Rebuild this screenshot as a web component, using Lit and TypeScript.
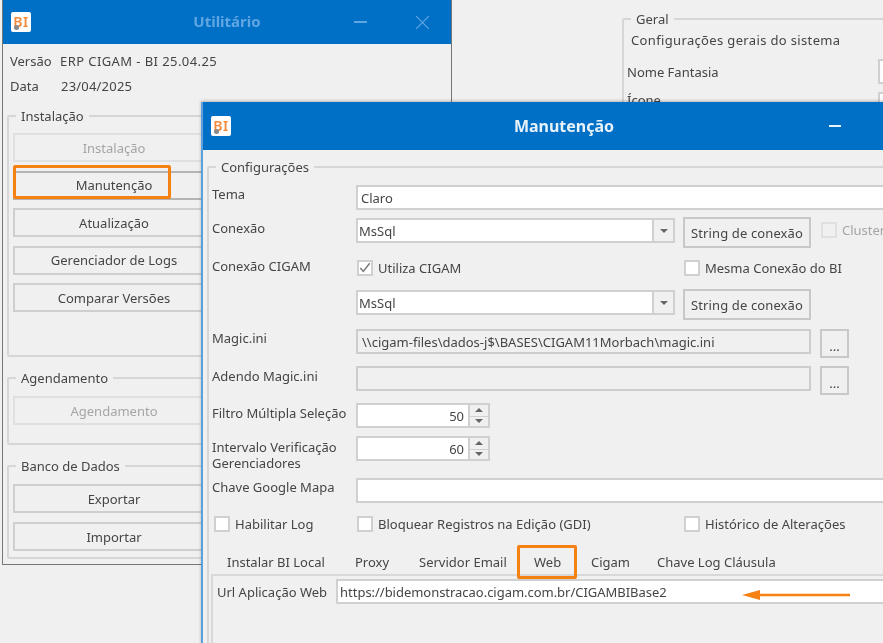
import { LitElement, html, css } from "lit";
import { customElement } from "lit/decorators.js";

const logo = () => html`<div class="logo"><span>BI</span><i></i></div>`;
const check = (label: string, on = false, off = false) => html`<label class="check ${off ? "off" : ""}">
  <span class="box">${on ? html`<svg width="14" height="14" viewBox="0 0 14 14"><path d="M1.5 7 5 11 12.5 1.5" fill="none" stroke="#777" stroke-width="1.7"/></svg>` : ""}</span>${label}</label>`;
const select = (v: string) => html`<div class="select"><span class="val">${v}</span><span class="drop"><b class="down"></b></span></div>`;
const spin = (v: string) => html`<div class="spin"><span class="num">${v}</span><span class="arrows"><span><b class="up"></b></span><span><b class="down"></b></span></span></div>`;

@customElement("app-root")
export class AppRoot extends LitElement {
  static styles = css`
    :host { display: block; width: 883px; height: 643px; overflow: hidden; position: relative; background: #f0f0f0; }
    * { box-sizing: border-box; }
    .stage { position: relative; width: 883px; height: 643px; overflow: hidden; background: #f0f0f0; filter: blur(0.5px);
      font: 13px/16px "Noto Sans", sans-serif; color: #454545; }
    .win { position: absolute; background: #f0f0f0; }
    .bar { background: #0070c6; display: grid; grid-template-columns: 1fr auto 1fr; align-items: center; font-weight: 700; padding: 0 8px; }
    .logo { position: relative; width: 20px; height: 20px; background: #fff; border-radius: 2px; display: flex; align-items: center; justify-content: center; }
    .logo span { color: #f58a3c; font: 600 14px/20px "Noto Sans", sans-serif; letter-spacing: 0.5px; }
    .logo i { position: absolute; left: 3px; bottom: 2px; width: 5px; height: 5px; border-radius: 50%; background: #8a8a8a; }
    fieldset { margin: 0; min-width: 0; border: 2px solid #d6d6d6; border-radius: 2px; }
    legend { padding: 0 5px; margin-left: 7px; line-height: 18px; font-size: 13px; color: #454545; }

    .w1 { left: 2px; top: 0; width: 450px; height: 565px; border: solid #777; border-width: 0 1.5px 1.5px; }
    .w1 .bar { height: 44px; color: #5fa6e2; font-size: 15px; }
    .w1 .title { padding-bottom: 2px; }
    .ctrl { display: flex; justify-content: flex-end; align-items: center; gap: 49px; }
    .w1 .ctrl { color: #5fa6e2; margin-right: 14.5px; }
    .min { width: 13px; height: 1.5px; background: currentColor; }
    .ctrl svg { display: block; }
    .w1 .body { padding: 4px 5px 0 4px; }
    .meta { display: grid; grid-template-columns: 50px auto; grid-auto-rows: 25px; align-items: center; padding-left: 3px; }
    .wide-text { letter-spacing: 0.42px; }
    .date { letter-spacing: 0.2px; padding-left: 1px; }
    .stack { display: flex; flex-direction: column; gap: 8.5px; }
    .btn { display: flex; align-items: center; justify-content: center; height: 29px; border: 2px solid #cfcfcf; background: #f0f0f0; color: #454545; }
    .dark { border-color: #b4b4b4; }
    .off { color: #a5a5a5; }
    .btn.off { border-color: #e0e0e0; }
    .g-left { width: 214px; padding: 0 0 0 4px; }
    .g-left legend { margin-left: 3px; }
    .g-left .btn { width: 202px; }
    .g1 { height: 250px; margin-top: 9px; padding-top: 8px; }
    .g2 { height: 76px; margin-top: 12px; padding-top: 9px; }
    .g3 { height: 102px; margin-top: 12px; padding-top: 9px; }
    .g3 .stack { gap: 9px; }

    .bg { left: 622px; top: 10px; width: 300px; }
    .bg fieldset { height: 110px; padding: 3px 0 0 3px; }
    .bg legend { margin-left: 4px; }
    .bg p { margin: 0 0 0 4px; line-height: 18px; letter-spacing: 0.35px; }
    .bg .nf { display: flex; height: 25px; margin-top: 10px; }
    .bg .nf + .nf { margin-top: 8px; }
    .bg .inp { width: 40px; height: 25px; }
    .bg .nf span { padding-top: 5px; }
    .bg .nf + .nf span { padding-top: 0; }
    .bg .sp { width: 251px; flex: none; }

    .w2 { left: 201px; top: 102px; width: 724px; height: 560px; border-left: 2px solid #5aa0dc; box-shadow: 0 -1px 3px rgba(0,0,0,.25); }
    .w2 .bar { height: 48px; color: #e8f2fb; font-size: 16px; }
    .w2 .ctrl { margin-right: 76px; }
    .w2 .min { width: 12px; }
    .w2 .body { padding: 8px 0 0 4px; }
    .cfg { padding: 0; height: 500px; border-right: 0; }
    .form { display: grid; padding: 9px 0 0 3px;
      grid-template-rows: 32px 40px 32px 40px 37px 37px 33px 42px 38px 36px; }
    .row { display: grid; grid-template-columns: 144px 319px 8px 128px 10px auto; align-items: start; }
    .row > span:first-child, .r-file > span:first-child, .r-spin > span:first-child { padding-top: 1px; }
    .form > div > span.pad1 { padding-top: 2px; }
    .form > div > span.pad2 { padding-top: 3px; }
    .inp { height: 25px; border: 2px solid #d0d0d0; background: #fff; padding: 0 3px; display: flex; align-items: center; }
    .wide { grid-column: 2 / -1; width: 600px; }
    .select { height: 25px; margin-top: 1px; border: 2px solid #d0d0d0; background: #fff; display: flex; align-items: center; grid-column: 2; }
    .val { flex: 1; padding-left: 1px; }
    .drop { width: 21px; height: 100%; background: #f0f0f0; border-left: 2px solid #d0d0d0; display: flex; align-items: center; justify-content: center; }
    b.down { width: 0; height: 0; border: 4px solid transparent; border-top: 4px solid #666; border-bottom: 0; }
    b.up { width: 0; height: 0; border: 4px solid transparent; border-bottom: 4px solid #666; border-top: 0; }
    .row .btn { grid-column: 4; height: 31px; border-color: #c8c8c8; letter-spacing: 0.12px; }
    .check { display: inline-flex; align-items: center; gap: 5px; height: 16px; white-space: nowrap; }
    .box { width: 16px; height: 16px; border: 2px solid #d0d0d0; background: #fff; display: flex; align-items: center; justify-content: center; flex: none; }
    .check.off .box { background: #f0f0f0; border-color: #e0e0e0; }
    .c2-col { grid-column: 2; padding: 3px 0 0 1px; }
    .c4-col { grid-column: 4; padding: 3px 0 0 1px; }
    .c6-col { grid-column: 6; padding: 5px 0 0 0; }
    .r-file { display: grid; grid-template-columns: 144px 455px 9px 29px; align-items: start; }
    .ro { background: #f0f0f0; border-color: #cdcdcd; white-space: nowrap; padding-left: 4px; }
    .dots { height: 29px; padding-top: 4px; border-color: #c8c8c8; }
    .r-spin { display: grid; grid-template-columns: 144px 134px; align-items: start; }
    .spin { height: 25px; display: flex; border: 2px solid #d0d0d0; background: #fff; }
    .num { flex: 1; text-align: right; padding-right: 4px; line-height: 22px; }
    .arrows { width: 20px; display: grid; grid-template-rows: 1fr 1fr; background: #f0f0f0; border-left: 2px solid #d0d0d0; }
    .arrows span { display: flex; align-items: center; justify-content: center; }
    .arrows span + span { border-top: 1px solid #d0d0d0; }
    .r-checks { display: grid; grid-template-columns: 143px 327px auto; padding-left: 2px; }
    .tabs { display: grid; grid-template-columns: 128px 64px 115px 57px 66px auto; padding: 0 0 2px 15px; height: 22px; align-items: center; white-space: nowrap; }
    .panel { margin-left: -1px; width: 700px; height: 90px; border: 2px solid #d8d8d8; padding: 3px 0 0 4px; display: flex; gap: 9px; }
    .panel span { padding-top: 5px; white-space: nowrap; flex: none; }
    .panel .inp { width: 600px; letter-spacing: -0.03px; padding: 0 2px; }

    .mark { position: absolute; border: 3.5px solid #f58113; border-radius: 2px; }
    .m1 { left: 13px; top: 165px; width: 158px; height: 34px; }
    .m2 { left: 517px; top: 545px; width: 60px; height: 34px; }
    .arrow { position: absolute; left: 742px; top: 589px; }
  `;

  render() {
    return html`<div class="stage">
      <div class="win bg">
        <fieldset><legend>Geral</legend>
          <p>Configurações gerais do sistema</p>
          <div class="nf"><span class="sp">Nome Fantasia</span><div class="inp"></div></div>
          <div class="nf"><span class="sp">Ícone</span><div class="inp"></div></div>
        </fieldset>
      </div>

      <div class="win w1">
        <div class="bar">${logo()}<span class="title">Utilitário</span>
          <div class="ctrl"><span class="min"></span>
            <svg width="13" height="13" viewBox="0 0 13 13"><path d="M0 0 13 13M13 0 0 13" stroke="currentColor" stroke-width="1.2"/></svg></div>
        </div>
        <div class="body">
          <div class="meta"><span>Versão</span><span class="wide-text">ERP CIGAM - BI 25.04.25</span><span>Data</span><span class="date">23/04/2025</span></div>
          <fieldset class="g-left g1"><legend>Instalação</legend>
            <div class="stack">
              <div class="btn off">Instalação</div>
              <div class="btn dark">Manutenção</div>
              <div class="btn">Atualização</div>
              <div class="btn">Gerenciador de Logs</div>
              <div class="btn">Comparar Versões</div>
            </div>
          </fieldset>
          <fieldset class="g-left g2"><legend>Agendamento</legend>
            <div class="btn off">Agendamento</div>
          </fieldset>
          <fieldset class="g-left g3"><legend>Banco de Dados</legend>
            <div class="stack"><div class="btn">Exportar</div><div class="btn">Importar</div></div>
          </fieldset>
        </div>
      </div>

      <div class="win w2">
        <div class="bar">${logo()}<span>Manutenção</span><div class="ctrl"><span class="min"></span></div></div>
        <div class="body">
          <fieldset class="cfg"><legend>Configurações</legend>
            <div class="form">
              <div class="row"><span>Tema</span><div class="inp wide">Claro</div></div>
              <div class="row"><span class="pad2">Conexão</span>${select("MsSql")}<span></span><div class="btn">String de conexão</div><span></span>
                <span class="c6-col">${check("Cluster", false, true)}</span></div>
              <div class="row"><span>Conexão CIGAM</span><span class="c2-col">${check("Utiliza CIGAM", true)}</span><span></span><span class="c4-col">${check("Mesma Conexão do BI")}</span></div>
              <div class="row"><span></span>${select("MsSql")}<span></span><div class="btn">String de conexão</div></div>
              <div class="r-file"><span>Magic.ini</span><div class="inp ro">\\\\cigam-files\\dados-j$\\BASES\\CIGAM11Morbach\\magic.ini</div><span></span><div class="btn dots">...</div></div>
              <div class="r-file"><span class="pad1">Adendo Magic.ini</span><div class="inp ro"></div><span></span><div class="btn dots">...</div></div>
              <div class="r-spin"><span class="pad1">Filtro Múltipla Seleção</span>${spin("50")}</div>
              <div class="r-spin"><span class="pad2">Intervalo Verificação<br />Gerenciadores</span>${spin("60")}</div>
              <div class="row"><span>Chave Google Mapa</span><div class="inp wide"></div></div>
              <div class="r-checks">${check("Habilitar Log")}${check("Bloquear Registros na Edição (GDI)")}${check("Histórico de Alterações")}</div>
              <div class="tabs"><span>Instalar BI Local</span><span>Proxy</span><span>Servidor Email</span><span>Web</span><span>Cigam</span><span>Chave Log Cláusula</span></div>
              <div class="panel"><span>Url Aplicação Web</span><div class="inp">https://bidemonstracao.cigam.com.br/CIGAMBIBase2</div></div>
            </div>
          </fieldset>
        </div>
      </div>

      <div class="mark m1"></div>
      <div class="mark m2"></div>
      <svg class="arrow" width="110" height="12" viewBox="0 0 110 12"><path d="M0 6 18 1V4.8H108V7.2H18V11Z" fill="#f58113"/></svg>
    </div>`;
  }
}
